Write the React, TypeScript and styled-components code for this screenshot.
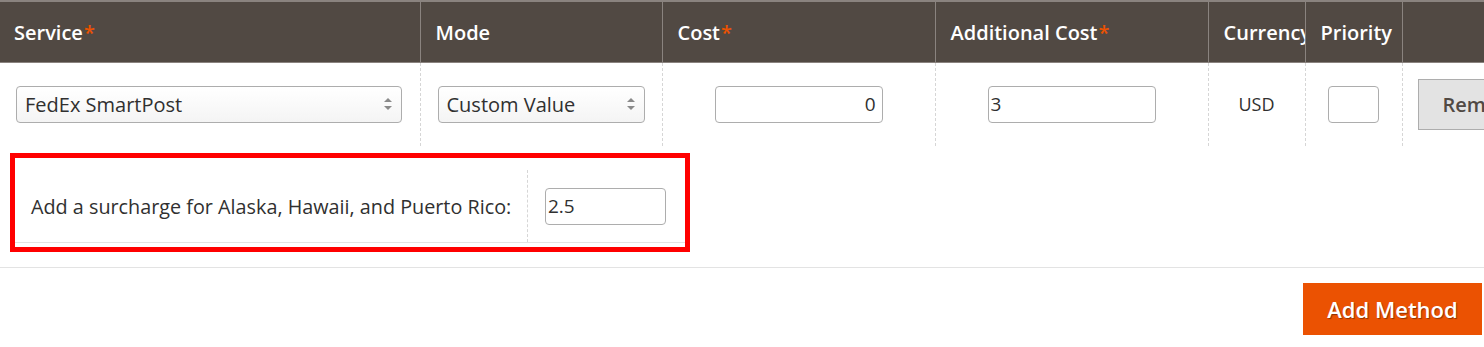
import styled, { createGlobalStyle } from "styled-components";

const GlobalStyle = createGlobalStyle`
  html, body {
    margin: 0;
    padding: 0;
    background: #fff;
    overflow: hidden;
  }
  body {
    font-family: "Open Sans", "Liberation Sans", sans-serif;
    color: #303030;
  }
`;

const Page = styled.div`
  width: 1484px;
  overflow: hidden;
`;

const Table = styled.table`
  width: 1580px;
  border-collapse: collapse;
  table-layout: fixed;
`;

const HeadCell = styled.th<{ $w: number }>`
  width: ${(p) => p.$w}px;
  height: 61px;
  padding: 1px 0 0 15px;
  background: #514943;
  color: #fff;
  font-size: 20px;
  font-weight: 600;
  text-align: left;
  white-space: nowrap;
  overflow: hidden;
  border-top: 2px solid #8a837f;
  border-bottom: 1px solid #8a837f;
  border-left: 1px solid #8a837f;
  box-sizing: border-box;
  &:first-child {
    border-left: none;
    padding-left: 14px;
  }
`;

const Req = styled.span`
  color: #eb5202;
  margin-left: 1px;
`;

const Cell = styled.td<{ $pad?: number }>`
  height: 84px;
  padding: 0 0 0 ${(p) => p.$pad ?? 16}px;
  text-align: left;
  vertical-align: middle;
  border-left: 1px dashed #d6d6d6;
  box-sizing: border-box;
  font-size: 18px;
  &:first-child {
    border-left: none;
  }
`;

const CenterCell = styled(Cell)`
  padding: 0;
  text-align: center;
`;

const SelectWrap = styled.div<{ $w: number }>`
  position: relative;
  width: ${(p) => p.$w}px;
  height: 37px;
`;

const Select = styled.select`
  appearance: none;
  width: 100%;
  height: 100%;
  box-sizing: border-box;
  border: 1px solid #adadad;
  border-radius: 4px;
  background: linear-gradient(#ffffff, #f4f4f4);
  padding: 0 30px 0 8px;
  font-family: inherit;
  font-size: 20px;
  color: #303030;
`;

const Arrows = styled.svg`
  position: absolute;
  right: 9px;
  top: 11px;
  pointer-events: none;
`;

const TextInput = styled.input<{ $w: number; $align?: string }>`
  width: ${(p) => p.$w}px;
  height: 37px;
  box-sizing: border-box;
  border: 1px solid #adadad;
  border-radius: 4px;
  padding: 0 6px 0 2px;
  font-family: inherit;
  font-size: 19px;
  color: #303030;
  text-align: ${(p) => p.$align || "left"};
  vertical-align: middle;
`;

const RemoveButton = styled.button`
  height: 51px;
  width: 130px;
  box-sizing: border-box;
  background: #e3e3e3;
  border: 1px solid #adadad;
  font-family: inherit;
  font-size: 20px;
  font-weight: 600;
  color: #514943;
  text-align: left;
  padding: 0 0 0 24px;
  vertical-align: middle;
`;

const Highlight = styled.div`
  margin: 7px 0 0 10px;
  width: 680px;
  height: 99px;
  box-sizing: border-box;
  border: 5px solid #ff0000;
  padding-top: 12px;
`;

const SurchargeRow = styled.div`
  display: flex;
  align-items: center;
  height: 72px;
  border-bottom: 1px solid #e3e3e3;
`;

const SurchargeLabel = styled.div`
  width: 512px;
  box-sizing: border-box;
  padding-left: 16px;
  font-size: 19.8px;
  color: #303030;
  white-space: nowrap;
`;

const SurchargeField = styled.div`
  align-self: stretch;
  display: flex;
  align-items: center;
  padding-left: 17px;
  border-left: 1px dashed #d6d6d6;
`;

const Divider = styled.div`
  margin-top: 15px;
  border-top: 1px solid #e3e3e3;
`;

const Footer = styled.div`
  display: flex;
  justify-content: flex-end;
  padding: 15px 2px 0 0;
`;

const AddButton = styled.button`
  width: 179px;
  height: 52px;
  border: none;
  background: #eb5202;
  color: #fff;
  font-family: inherit;
  font-size: 22px;
  font-weight: 600;
  text-shadow: 1px 1px 1px rgba(0, 0, 0, 0.4);
`;

const SelectArrows = () => (
  <Arrows width="10" height="14" viewBox="0 0 10 14">
    <path d="M5 1 L9 5 H1 Z" fill="#8a8a8a" />
    <path d="M1 9 H9 L5 13 Z" fill="#8a8a8a" />
  </Arrows>
);

const columns = [
  { label: "Service", w: 420, req: true },
  { label: "Mode", w: 242, req: false },
  { label: "Cost", w: 273, req: true },
  { label: "Additional Cost", w: 273, req: true },
  { label: "Currency", w: 97, req: false },
  { label: "Priority", w: 97, req: false },
  { label: "", w: 178, req: false },
];

export default function App() {
  return (
    <Page>
      <GlobalStyle />
      <Table>
        <thead>
          <tr>
            {columns.map((c, i) => (
              <HeadCell key={i} $w={c.w}>
                {c.label}
                {c.req && <Req>*</Req>}
              </HeadCell>
            ))}
          </tr>
        </thead>
        <tbody>
          <tr>
            <Cell>
              <SelectWrap $w={386}>
                <Select defaultValue="smartpost">
                  <option value="smartpost">FedEx SmartPost</option>
                </Select>
                <SelectArrows />
              </SelectWrap>
            </Cell>
            <Cell $pad={17}>
              <SelectWrap $w={207}>
                <Select defaultValue="custom">
                  <option value="custom">Custom Value</option>
                </Select>
                <SelectArrows />
              </SelectWrap>
            </Cell>
            <CenterCell>
              <TextInput $w={168} $align="right" defaultValue="0" />
            </CenterCell>
            <CenterCell>
              <TextInput $w={168} defaultValue="3" />
            </CenterCell>
            <CenterCell>USD</CenterCell>
            <CenterCell>
              <TextInput $w={51} defaultValue="" />
            </CenterCell>
            <Cell $pad={15}>
              <RemoveButton>Remove</RemoveButton>
            </Cell>
          </tr>
        </tbody>
      </Table>
      <Highlight>
        <SurchargeRow>
          <SurchargeLabel>
            Add a surcharge for Alaska, Hawaii, and Puerto Rico:
          </SurchargeLabel>
          <SurchargeField>
            <TextInput $w={121} defaultValue="2.5" />
          </SurchargeField>
        </SurchargeRow>
      </Highlight>
      <Divider />
      <Footer>
        <AddButton>Add Method</AddButton>
      </Footer>
    </Page>
  );
}
